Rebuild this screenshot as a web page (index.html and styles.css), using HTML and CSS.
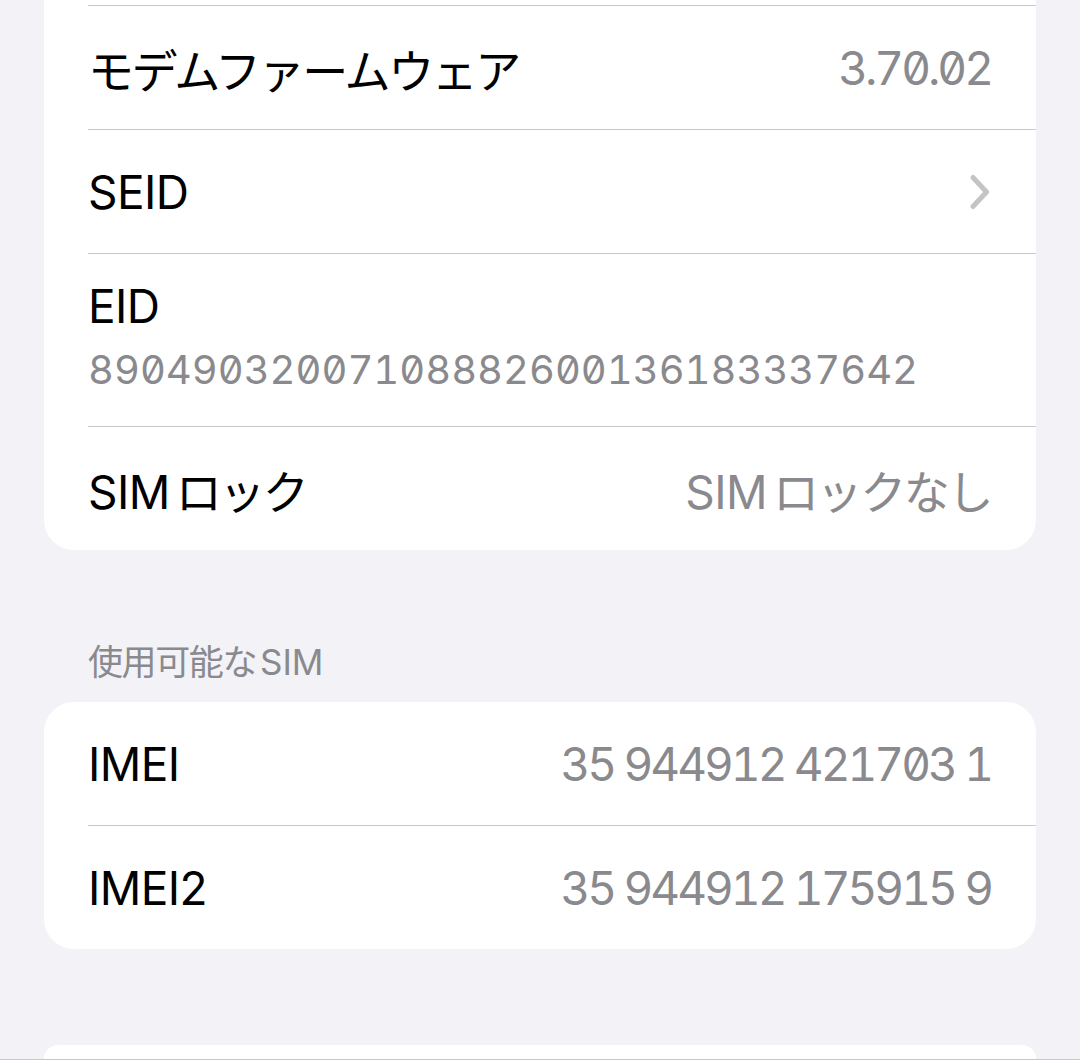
FILE: index.html
```html
<!DOCTYPE html>
<html lang="ja">
<head>
    <meta charset="UTF-8">
    <meta name="viewport" content="width=device-width, initial-scale=1.0">
    <title>情報</title>
    <link rel="stylesheet" href="styles.css">
</head>
<body>
    <div class="card card-cut">
        <div class="row">
            <span class="label ja">モデムファームウェア</span>
            <span class="value num">3.70.02</span>
        </div>
        <div class="row">
            <span class="label">SEID</span>
            <svg class="chevron" width="22" height="36" viewBox="0 0 22 36">
                <path d="M4 3.5 L17.5 18 L4 32.5" fill="none" stroke="#c4c4c7" stroke-width="5" stroke-linecap="round" stroke-linejoin="round"/>
            </svg>
        </div>
        <div class="row row-tall">
            <span class="label">EID</span>
            <span class="sub">89049032007108882600136183337642</span>
        </div>
        <div class="row">
            <span class="label">SIM<span class="ja gap">ロック</span></span>
            <span class="value">SIM<span class="ja gap">ロックなし</span></span>
        </div>
    </div>

    <div class="section-title"><span class="ja">使用可能な</span><span class="gap">SIM</span></div>
    <div class="card">
        <div class="row">
            <span class="label">IMEI</span>
            <span class="value num">35 944912 421703 1</span>
        </div>
        <div class="row">
            <span class="label">IMEI2</span>
            <span class="value num">35 944912 175915 9</span>
        </div>
    </div>

    <div class="card card-next"></div>
</body>
</html>
```

FILE: styles.css
```css
html, body {
    margin: 0;
    padding: 0;
}
html {
    height: 1060px;
    overflow: hidden;
}
body {
    height: 1059px;
    overflow: hidden;
    border-bottom: 1px solid #c8c8cb;
    background-color: #f2f2f7;
    font-family: Inter, "Noto Sans CJK JP", sans-serif;
    color: #000;
    padding: 0 44px;
}
.card {
    background-color: #fff;
    border-radius: 30px;
    overflow: hidden;
}
.card-cut {
    border-top-left-radius: 0;
    border-top-right-radius: 0;
    padding-top: 5px;
}
.card-next {
    margin-top: 96px;
    height: 14px;
    border-bottom-left-radius: 0;
    border-bottom-right-radius: 0;
}
.row {
    display: flex;
    align-items: center;
    justify-content: space-between;
    height: 123px;
    margin-left: 44px;
    padding-right: 45px;
    border-top: 1px solid #c8c8cb;
}
.card .row:first-child {
    border-top: none;
}
.card-cut .row:first-child {
    border-top: 1px solid #c8c8cb;
}
.row-tall {
    height: 146px;
    padding-top: 26px;
    flex-direction: column;
    align-items: flex-start;
    justify-content: flex-start;
}
.row-tall .label {
    line-height: 52px;
    margin-bottom: 12px;
}
.label {
    font-size: 46px;
    letter-spacing: -0.6px;
}
.ja {
    letter-spacing: -2.4px;
}
.gap {
    margin-left: 6px;
}
.value {
    font-size: 46px;
    color: #8a8a8e;
    letter-spacing: -0.6px;
}
.value.num {
    letter-spacing: -3px;
    font-feature-settings: "zero" 1, "tnum" 1;
}
.sub {
    font-size: 40px;
    line-height: 52px;
    color: #8a8a8e;
    font-feature-settings: "zero" 1, "tnum" 1;
}
.chevron {
    display: block;
}
.section-title {
    font-size: 35px;
    color: #8a8a8e;
    padding-left: 44px;
    margin-top: 90px;
    margin-bottom: 18px;
    line-height: 44px;
}
.section-title .ja {
    letter-spacing: -1.4px;
}
.section-title .gap {
    margin-left: 4px;
}
```
